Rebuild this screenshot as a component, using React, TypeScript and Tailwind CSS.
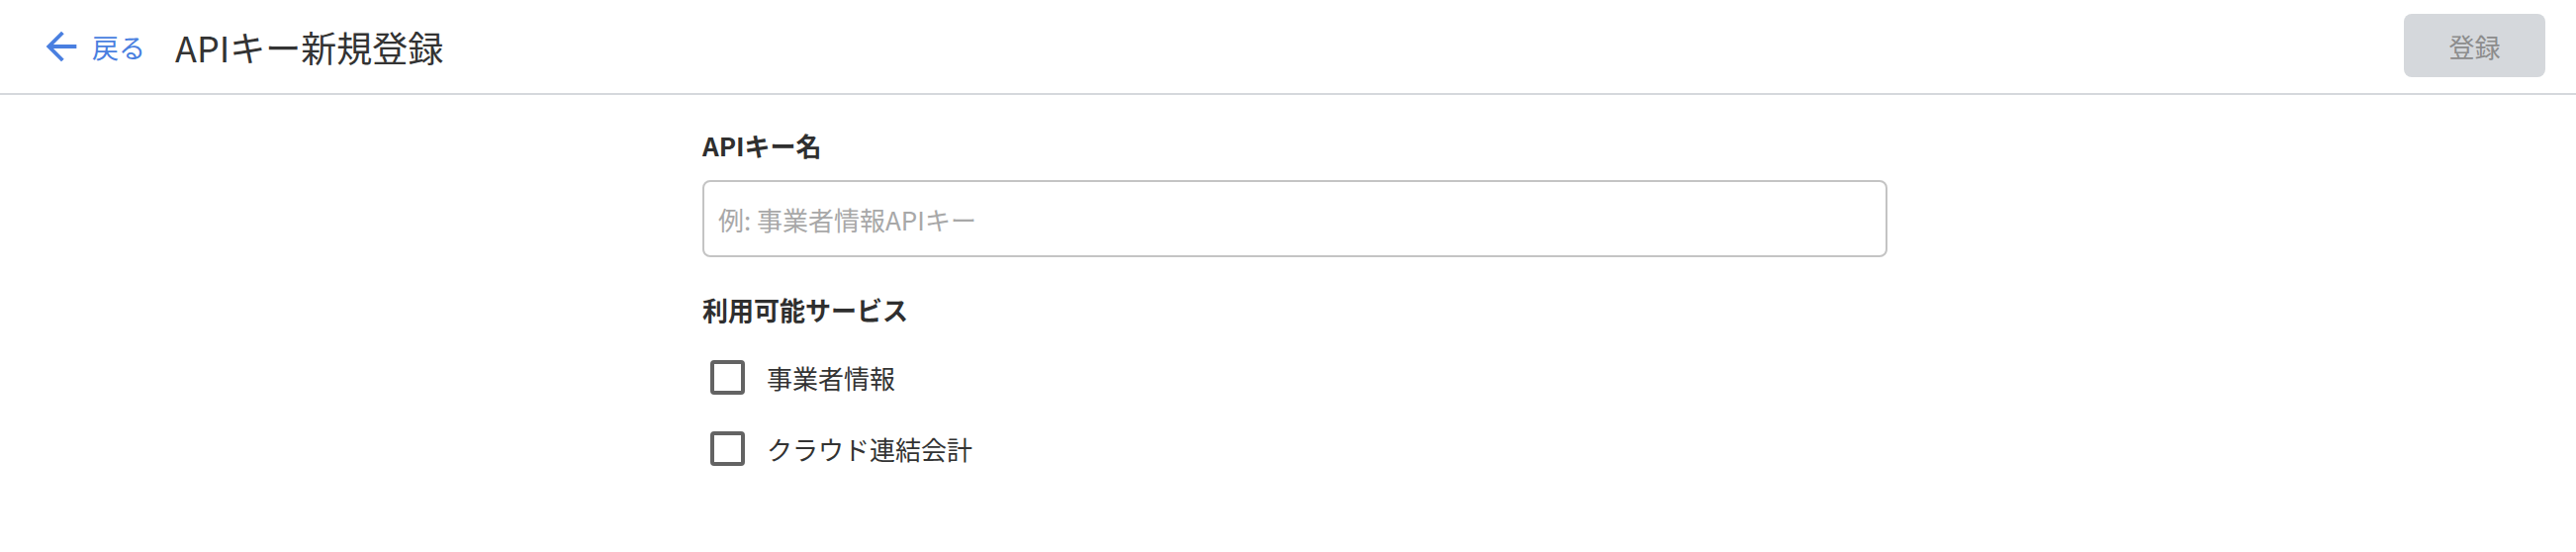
export default function App() {
  const services = ["事業者情報", "クラウド連結会計"];

  return (
    <div className="min-h-screen bg-white text-[#333] font-['Noto_Sans_CJK_JP','Noto_Sans',sans-serif]">
      <header className="flex h-[96px] items-center justify-between border-b-2 border-[#d5d8dc] pl-[39px] pr-[31px]">
        <div className="flex items-center">
          <button className="flex items-center text-[#4a7fe0]">
            <svg viewBox="0 0 24 24" className="h-[46px] w-[46px]" fill="currentColor">
              <path d="M20 11H7.83l5.59-5.59L12 4l-8 8 8 8 1.41-1.41L7.83 13H20v-2z" />
            </svg>
            <span className="ml-[8px] text-[27px] leading-none">戻る</span>
          </button>
          <h1 className="ml-[30px] text-[36px] leading-none text-[#333]">APIキー新規登録</h1>
        </div>
        <button className="mb-[2px] h-[64px] w-[143px] rounded-[8px] bg-[#d5d8dc] text-[26px] text-[#8c8c8c]">登録</button>
      </header>

      <main className="mx-auto w-[1212px] pl-[14px] pt-[31px]">
        <label className="block text-[26px] font-bold leading-[39px] text-[#2f2f2f]">APIキー名</label>
        <input
          type="text"
          placeholder="例: 事業者情報APIキー"
          className="mt-[16px] h-[78px] w-full rounded-[8px] border-2 border-[#c4c4c4] px-[14px] text-[26px] outline-none placeholder:text-[#a8a8a8]"
        />

        <div className="mt-[33px] text-[26px] font-bold leading-[39px] text-[#2f2f2f]">利用可能サービス</div>
        <div className="mt-[13px] flex flex-col">
          {services.map((s) => (
            <label key={s} className="flex h-[72px] items-center">
              <span className="ml-[8px] h-[35px] w-[35px] rounded-[4px] border-4 border-[#636363]" />
              <span className="ml-[22px] text-[26px] text-[#333]">{s}</span>
            </label>
          ))}
        </div>
      </main>
    </div>
  );
}
